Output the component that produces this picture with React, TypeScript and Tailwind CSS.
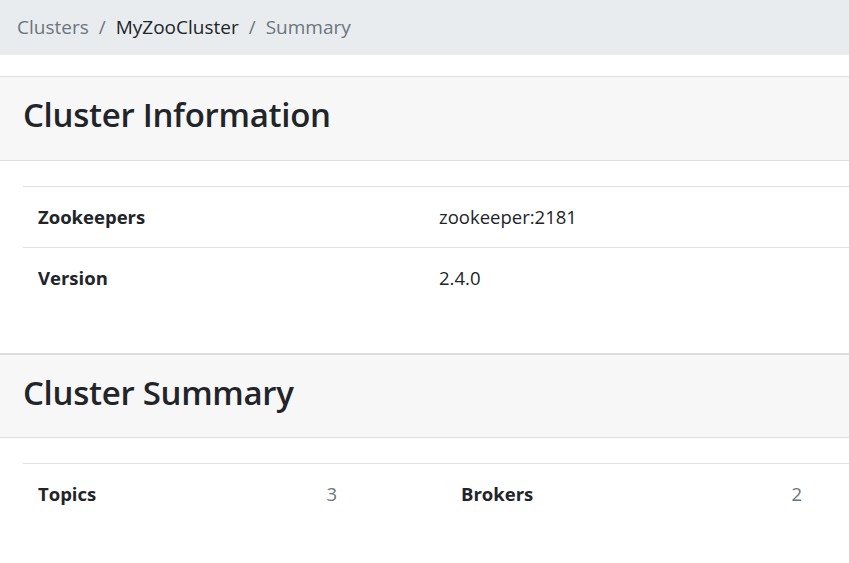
import React from 'react';

const font = { fontFamily: '"Open Sans", "Noto Sans", sans-serif' };

const ClusterSummary = () => {
  const info = [
    { label: 'Zookeepers', value: 'zookeeper:2181' },
    { label: 'Version', value: '2.4.0' },
  ];

  return (
    <div className="min-h-screen w-[849px] overflow-hidden bg-white text-[#212529]" style={font}>
      {/* Breadcrumb */}
      <nav className="flex h-[55px] items-center bg-[#e9ecef] pl-[17px] text-[19px] text-[#6c757d]">
        <span>Clusters</span>
        <span className="px-[10px]">/</span>
        <span className="text-[#212529]">MyZooCluster</span>
        <span className="px-[10px]">/</span>
        <span>Summary</span>
      </nav>

      {/* Cluster Information */}
      <section className="mt-[21px]">
        <div className="flex h-[85px] items-center border-y border-[#dedede] bg-[#f7f7f7] pb-[8px] pl-[23px]">
          <h3 className="text-[33px] font-semibold leading-none tracking-[-0.3px]">Cluster Information</h3>
        </div>
        <div className="ml-[23px] mt-[25px] text-[18.5px]">
          {info.map((row) => (
            <div key={row.label} className="grid h-[61px] grid-cols-[401px_1fr] items-center border-t border-[#dee2e6]">
              <div className="pl-[15px] font-bold">{row.label}</div>
              <div className="pl-[15px]">{row.value}</div>
            </div>
          ))}
        </div>
      </section>

      {/* Cluster Summary */}
      <section className="mt-[45px]">
        <div className="flex h-[85px] items-center border-t-2 border-b border-[#dedede] bg-[#f7f7f7] pb-[8px] pl-[23px]">
          <h3 className="text-[33px] font-semibold leading-none tracking-[-0.3px]">Cluster Summary</h3>
        </div>
        <div className="ml-[23px] mt-[25px] flex h-[61px] items-center border-t border-[#dee2e6] text-[18.5px]">
          <div className="flex w-[329px] items-center justify-between px-[15px]">
            <span className="font-bold">Topics</span>
            <span className="text-[#6c757d]">3</span>
          </div>
          <div className="ml-[94px] flex w-[371px] items-center justify-between px-[15px]">
            <span className="font-bold">Brokers</span>
            <span className="text-[#6c757d]">2</span>
          </div>
        </div>
      </section>
    </div>
  );
};

export default ClusterSummary;
